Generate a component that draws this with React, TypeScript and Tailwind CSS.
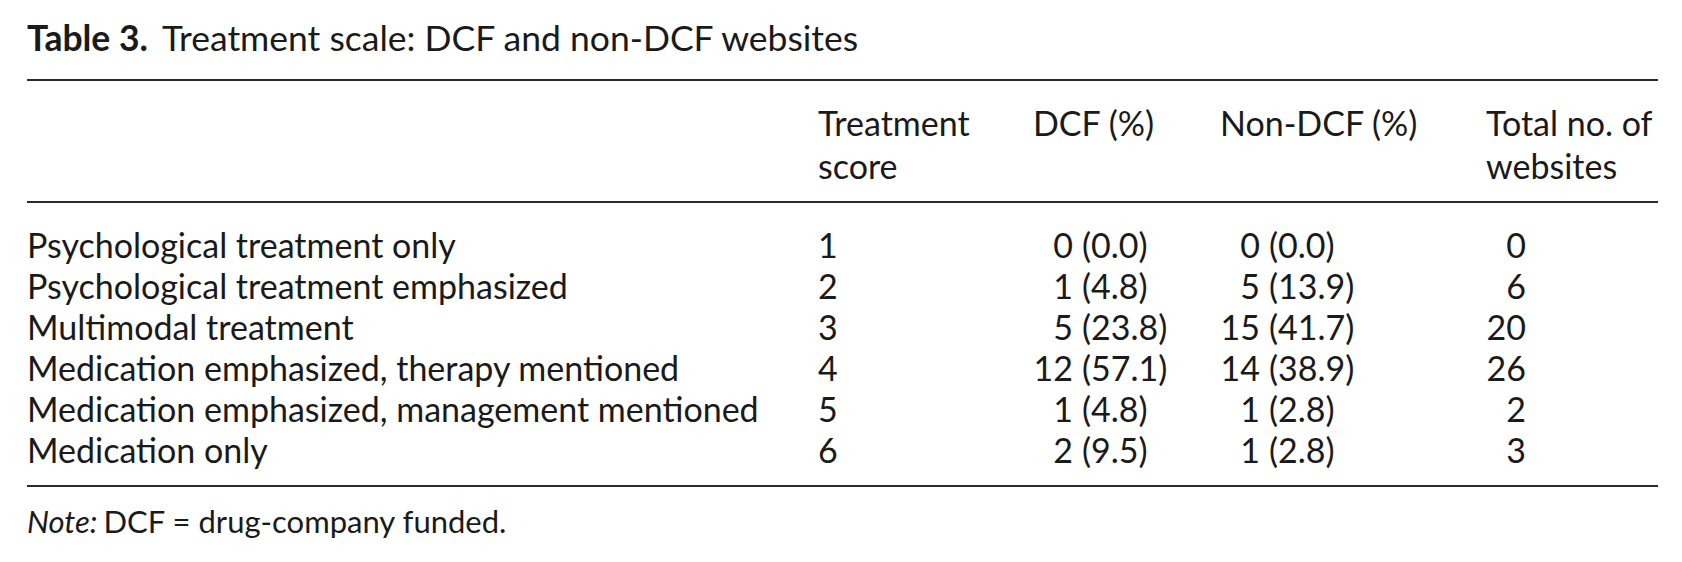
import React from "react";

const rows: [string, string, string, string, string, string, string][] = [
  ["Psychological treatment only", "1", "0", "(0.0)", "0", "(0.0)", "0"],
  ["Psychological treatment emphasized", "2", "1", "(4.8)", "5", "(13.9)", "6"],
  ["Multimodal treatment", "3", "5", "(23.8)", "15", "(41.7)", "20"],
  ["Medication emphasized, therapy mentioned", "4", "12", "(57.1)", "14", "(38.9)", "26"],
  ["Medication emphasized, management mentioned", "5", "1", "(4.8)", "1", "(2.8)", "2"],
  ["Medication only", "6", "2", "(9.5)", "1", "(2.8)", "3"],
];

const cols = "grid grid-cols-[791px_215px_187px_266px_172px]";

export default function App() {
  return (
    <div
      className="w-[1682px] h-[562px] bg-white text-[#1a1a1a] pl-[27px] pt-[17px]"
      style={{ fontFamily: "Lato, 'Open Sans', sans-serif" }}
    >
      <div className="w-[1631px]">
        <div className="text-[35.5px] leading-[42px] whitespace-nowrap">
          <span className="font-bold">Table 3.</span>
          <span className="ml-[14px]">Treatment scale: DCF and non-DCF websites</span>
        </div>
        <div className="mt-[20px] h-[2px] bg-[#2a2a2a]" />
        <div className={`${cols} text-[34px] leading-[43px] pt-[20px] pb-[14px]`}>
          <div />
          <div>
            Treatment
            <br />
            score
          </div>
          <div className="whitespace-nowrap">DCF (%)</div>
          <div className="whitespace-nowrap">Non-DCF (%)</div>
          <div className="whitespace-nowrap">
            Total no. of
            <br />
            websites
          </div>
        </div>
        <div className="h-[2px] bg-[#2a2a2a]" />
        <div className="pt-[21px] pb-[15px] text-[34px] leading-[41px]">
          {rows.map((r) => (
            <div key={r[0]} className={cols}>
              <div className="whitespace-nowrap">{r[0]}</div>
              <div>{r[1]}</div>
              <div className="flex whitespace-nowrap">
                <span className="w-[40px] text-right">{r[2]}</span>
                <span className="ml-[9px]">{r[3]}</span>
              </div>
              <div className="flex whitespace-nowrap">
                <span className="w-[40px] text-right">{r[4]}</span>
                <span className="ml-[9px]">{r[5]}</span>
              </div>
              <div className="flex">
                <span className="w-[40px] text-right">{r[6]}</span>
              </div>
            </div>
          ))}
        </div>
        <div className="h-[2px] bg-[#2a2a2a]" />
        <div className="mt-[14px] text-[31px] leading-[40px] whitespace-nowrap">
          <span className="italic">Note:</span>
          <span className="ml-[6px]">DCF = drug-company funded.</span>
        </div>
      </div>
    </div>
  );
}
